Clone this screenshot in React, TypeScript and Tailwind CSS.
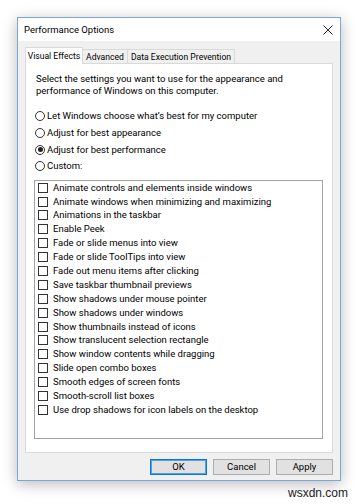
// Performance Options dialog — Windows 10 style
const effects = [
  "Animate controls and elements inside windows",
  "Animate windows when minimizing and maximizing",
  "Animations in the taskbar",
  "Enable Peek",
  "Fade or slide menus into view",
  "Fade or slide ToolTips into view",
  "Fade out menu items after clicking",
  "Save taskbar thumbnail previews",
  "Show shadows under mouse pointer",
  "Show shadows under windows",
  "Show thumbnails instead of icons",
  "Show translucent selection rectangle",
  "Show window contents while dragging",
  "Slide open combo boxes",
  "Smooth edges of screen fonts",
  "Smooth-scroll list boxes",
  "Use drop shadows for icon labels on the desktop",
];

const options = [
  { label: "Let Windows choose what\u2019s best for my computer", checked: false },
  { label: "Adjust for best appearance", checked: false },
  { label: "Adjust for best performance", checked: true },
  { label: "Custom:", checked: false },
];

function Radio({ checked }: { checked: boolean }) {
  return (
    <span className="w-[10px] h-[10px] rounded-full border border-[#333] bg-white flex items-center justify-center shrink-0">
      {checked && <span className="w-[5px] h-[5px] rounded-full bg-[#222]" />}
    </span>
  );
}

export default function App() {
  return (
    <div
      className="w-[360px] h-[504px] bg-white pt-[17px] pl-[17px] text-black text-[9.5px] leading-[12px]"
      style={{ fontFamily: 'Roboto, "Noto Sans", sans-serif' }}
    >
      {/* Window */}
      <div className="w-[324px] h-[464px] border border-[#7ba6d8] bg-[#f0f0f0] flex flex-col shadow-[0_3px_14px_rgba(0,0,0,0.28)]">
        {/* Title bar */}
        <div className="h-[23px] bg-white flex items-center justify-between pl-[6px] pr-[7px] shrink-0">
          <span className="text-[9.5px]">Performance Options</span>
          <svg width="10" height="10" viewBox="0 0 10 10">
            <path d="M0.5 0.5L9.5 9.5M9.5 0.5L0.5 9.5" stroke="#222" strokeWidth="1" />
          </svg>
        </div>

        <div className="flex-1 px-[7px] pt-[6px] flex flex-col">
          {/* Tabs */}
          <div className="flex items-end h-[16px] relative z-10 whitespace-nowrap text-[8.6px]">
            <div className="w-[58px] h-[17px] bg-white border border-[#d9d9d9] border-b-0 flex items-center justify-center -mb-px">
              Visual Effects
            </div>
            <div className="w-[45px] h-[14px] border border-[#d9d9d9] border-b-0 border-l-0 flex items-center justify-center">
              Advanced
            </div>
            <div className="w-[107px] h-[14px] border border-[#d9d9d9] border-b-0 border-l-0 flex items-center justify-center">
              Data Execution Prevention
            </div>
          </div>

          {/* Panel */}
          <div className="h-[390px] bg-white border border-[#d9d9d9] pl-[9px] pt-[9px]">
            <p className="pl-[1px]">
              Select the settings you want to use for the appearance and
              <br />
              performance of Windows on this computer.
            </p>

            <div className="mt-[11px] flex flex-col">
              {options.map((o) => (
                <div key={o.label} className="h-[16.7px] flex items-center gap-[2px]">
                  <Radio checked={o.checked} />
                  <span>{o.label}</span>
                </div>
              ))}
            </div>

            {/* Effects list */}
            <div className="mt-[5px] ml-[-1px] w-[289px] h-[259px] border border-[#a3a3a3] pl-[3px]">
              {effects.map((e) => (
                <div key={e} className="h-[13.9px] flex items-center gap-[5px]">
                  <span className="w-[10px] h-[10px] border border-[#333] bg-white shrink-0" />
                  <span>{e}</span>
                </div>
              ))}
            </div>
          </div>

          {/* Buttons */}
          <div className="flex justify-end gap-[6px] mt-[6px]">
            <button className="w-[57px] h-[16px] bg-[#e1e1e1] border border-[#0078d7] shadow-[inset_0_0_0_1px_#5aa0e0] flex items-center justify-center">
              OK
            </button>
            <button className="w-[57px] h-[16px] bg-[#e1e1e1] border border-[#adadad] flex items-center justify-center">
              Cancel
            </button>
            <button className="w-[57px] h-[16px] bg-[#e1e1e1] border border-[#adadad] flex items-center justify-center">
              Apply
            </button>
          </div>
        </div>
      </div>

      {/* Watermark */}
      <div
        className="text-right pr-[12px] mt-[5px] text-[12px] leading-[14px] text-[#222]"
        style={{ fontFamily: '"Liberation Sans", Arial, sans-serif' }}
      >
        wsxdn.com
      </div>
    </div>
  );
}
